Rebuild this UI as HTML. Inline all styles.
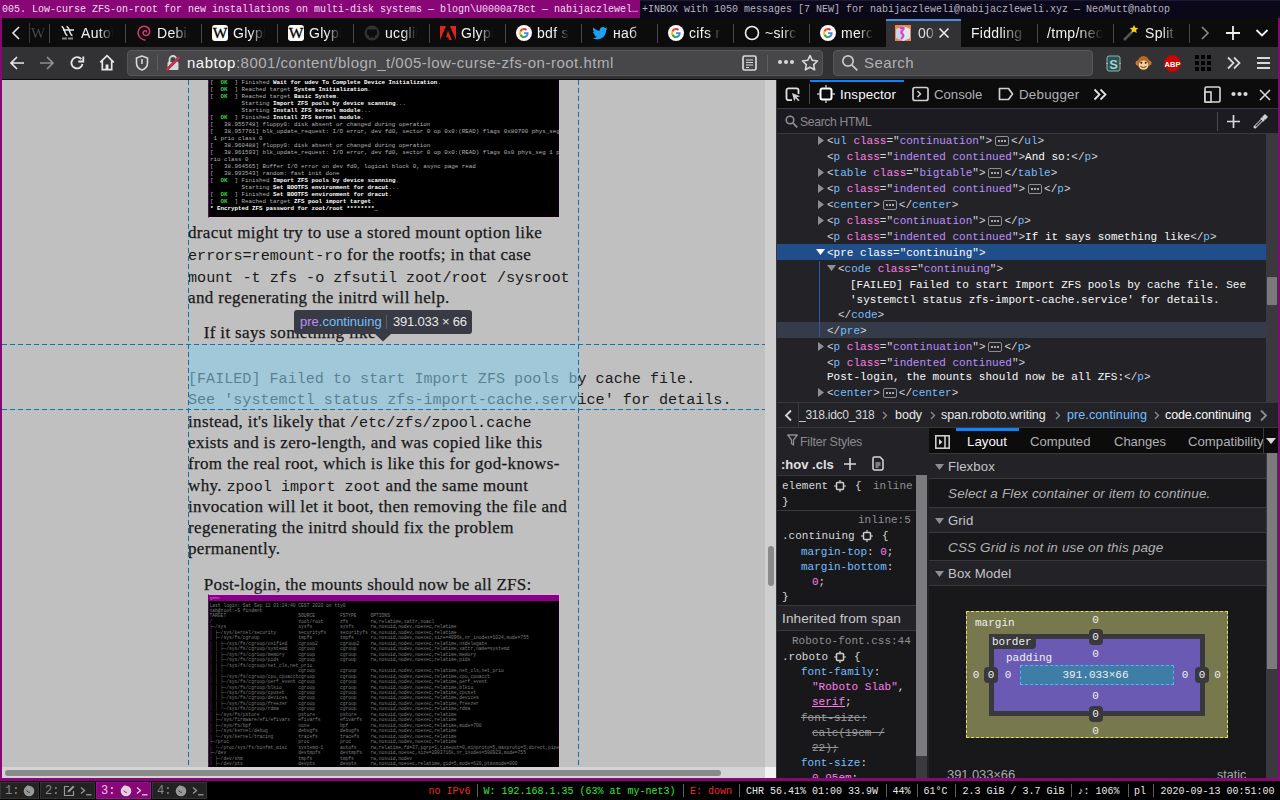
<!DOCTYPE html>
<html><head><meta charset="utf-8">
<style>
*{box-sizing:border-box}
html,body{margin:0;padding:0}
body{width:1280px;height:800px;position:relative;overflow:hidden;background:#000;font-family:"Liberation Sans",sans-serif}
.a{position:absolute}
.pre{white-space:pre}
.mono{font-family:"Liberation Mono",monospace}
.serif{font-family:"Liberation Serif",serif}
.fade{-webkit-mask-image:linear-gradient(to right,#000 55%,transparent 100%)}
</style></head><body>

<!-- ===== i3 title bars ===== -->
<div class="a" style="left:0;top:0;width:640px;height:18px;background:#880676"></div>
<div class="a mono pre" style="left:2px;top:1px;height:18px;line-height:18px;font-size:10px;color:#f4dcf4">005. Low-curse ZFS-on-root for new installations on multi-disk systems — blogn\U0000a78ct — nabijaczlewel…</div>
<div class="a" style="left:640px;top:0;width:640px;height:18px;background:#0b0819;border-top:1px solid #1d1836"></div>
<div class="a mono pre" style="left:642px;top:1px;height:18px;line-height:18px;font-size:10px;color:#b7b3c4">+INBOX with 1050 messages [7 NEW] for nabijaczleweli@nabijaczleweli.xyz — NeoMutt@nabtop</div>

<!-- ===== firefox frame ===== -->
<div class="a" style="left:0;top:18px;width:1280px;height:763px;background:#880676"></div>
<!-- tab bar -->
<div id="tabbar" class="a" style="left:2px;top:18px;width:1276px;height:29px;background:#0c0c0d"></div>
<!-- nav bar -->
<div id="navbar" class="a" style="left:2px;top:47px;width:1276px;height:32px;background:#323234"></div>
<div class="a" style="left:2px;top:79px;width:1276px;height:1px;background:#0c0c0d"></div>
<div id="tabs">
<svg class="a" style="left:11px;top:25px" width="10" height="16" viewBox="0 0 10 16"><path d="M8 2L2 8l6 6" fill="none" stroke="#e6e6e6" stroke-width="1.6"/></svg>
<div class="a" style="left:29px;top:23px;width:1px;height:20px;background:#3a3a3c"></div>
<div class="a fade" style="left:31px;top:24px;width:18px;height:18px;overflow:hidden;font-family:Liberation Serif;font-size:15px;line-height:18px;color:#4a4a4a">W</div>
<div class="a" style="left:49px;top:24px;width:1px;height:19px;background:#48484a"></div>
<div class="a" style="left:125px;top:24px;width:1px;height:19px;background:#48484a"></div>
<div class="a" style="left:201px;top:24px;width:1px;height:19px;background:#48484a"></div>
<div class="a" style="left:277px;top:24px;width:1px;height:19px;background:#48484a"></div>
<div class="a" style="left:353px;top:24px;width:1px;height:19px;background:#48484a"></div>
<div class="a" style="left:429px;top:24px;width:1px;height:19px;background:#48484a"></div>
<div class="a" style="left:505px;top:24px;width:1px;height:19px;background:#48484a"></div>
<div class="a" style="left:581px;top:24px;width:1px;height:19px;background:#48484a"></div>
<div class="a" style="left:657px;top:24px;width:1px;height:19px;background:#48484a"></div>
<div class="a" style="left:733px;top:24px;width:1px;height:19px;background:#48484a"></div>
<div class="a" style="left:809px;top:24px;width:1px;height:19px;background:#48484a"></div>
<div class="a" style="left:1037px;top:24px;width:1px;height:19px;background:#48484a"></div>
<div class="a" style="left:1113px;top:24px;width:1px;height:19px;background:#48484a"></div>
<div class="a" style="left:1189px;top:24px;width:1px;height:19px;background:#48484a"></div>
<div class="a" style="left:60px;top:25px;width:16px;height:16px"><svg width="16" height="16" viewBox="0 0 16 16"><path d="M1.500 1.500c1.500 0 2 1.500 3 4.500s1.500 4.500 3 4.500M6.500 1.500c1.500 0 2 1.500 3 4.500s1.500 4.500 3 4.500M3 5h11" fill="none" stroke="#e8e8e8" stroke-width="1.500"/><rect x="2" y="12.500" width="5" height="2" fill="#888"/><rect x="8" y="12.500" width="5" height="2" fill="#888"/></svg></div>
<div class="a pre fade" style="left:81px;top:24px;width:32px;height:18px;overflow:hidden;font-size:14px;line-height:18px;letter-spacing:0.3px;color:#f2f2f2">Autotools</div>
<div class="a" style="left:136px;top:25px;width:16px;height:16px"><svg width="16" height="16" viewBox="0 0 16 16"><path d="M9.5 15.2C6 14.600 2.300 12 2.100 8 1.900 4.300 4.700 1.200 8.300 1.300c3.200.1 5.500 2.500 5.400 5.300-.1 2.300-1.900 4-3.900 3.900-1.800-.1-2.900-1.400-2.700-2.900.2-1.300 1.300-2 2.300-1.800.9.200 1.300 1 1.100 1.700" fill="none" stroke="#d23a6e" stroke-width="1.6"/></svg></div>
<div class="a pre fade" style="left:157px;top:24px;width:32px;height:18px;overflow:hidden;font-size:14px;line-height:18px;letter-spacing:0.3px;color:#f2f2f2">Debian</div>
<div class="a" style="left:212px;top:25px;width:16px;height:16px"><svg width="16" height="16" viewBox="0 0 16 16"><rect x="0" y="0" width="16" height="16" rx="3" fill="#fff"/><text x="8" y="13" font-family="Liberation Serif" font-size="15.5" text-anchor="middle" fill="#000" stroke="#000" stroke-width="0.3">W</text></svg></div>
<div class="a pre fade" style="left:233px;top:24px;width:32px;height:18px;overflow:hidden;font-size:14px;line-height:18px;letter-spacing:0.3px;color:#f2f2f2">Glyph</div>
<div class="a" style="left:288px;top:25px;width:16px;height:16px"><svg width="16" height="16" viewBox="0 0 16 16"><rect x="0" y="0" width="16" height="16" rx="3" fill="#fff"/><text x="8" y="13" font-family="Liberation Serif" font-size="15.5" text-anchor="middle" fill="#000" stroke="#000" stroke-width="0.3">W</text></svg></div>
<div class="a pre fade" style="left:309px;top:24px;width:32px;height:18px;overflow:hidden;font-size:14px;line-height:18px;letter-spacing:0.3px;color:#f2f2f2">Glyph</div>
<div class="a" style="left:364px;top:25px;width:16px;height:16px"><svg width="16" height="16" viewBox="0 0 16 16"><circle cx="8" cy="8" r="7.5" fill="#333336"/><path d="M5 12.5v-2c-1.5-.3-2.3-1.2-2.3-3 0-.8.3-1.400.7-1.900-.1-.4-.1-1 .1-1.600.6 0 1.200.3 1.700.7.600-.2 1.200-.2 2.800-.2s2.200 0 2.800.2c.5-.4 1.100-.7 1.700-.7.2.6.2 1.200.1 1.600.4.500.7 1.100.7 1.900 0 1.800-.8 2.700-2.300 3v2z" fill="#0c0c0d"/></svg></div>
<div class="a pre fade" style="left:385px;top:24px;width:32px;height:18px;overflow:hidden;font-size:14px;line-height:18px;letter-spacing:0.3px;color:#f2f2f2">ucglib</div>
<div class="a" style="left:440px;top:25px;width:16px;height:16px"><svg width="16" height="16" viewBox="0 0 16 16"><path d="M0 1h6l-6 14z" fill="#e1251b"/><path d="M10 1h6v14z" fill="#e1251b"/><path d="M8 5.5l3.8 9.500h-2.600l-1.100-2.800H5.900z" fill="#e1251b"/></svg></div>
<div class="a pre fade" style="left:461px;top:24px;width:32px;height:18px;overflow:hidden;font-size:14px;line-height:18px;letter-spacing:0.3px;color:#f2f2f2">Glyph</div>
<div class="a" style="left:516px;top:25px;width:16px;height:16px"><svg width="16" height="16" viewBox="0 0 16 16"><circle cx="8" cy="8" r="8" fill="#fff"/><path d="M12.6 8.2c0-.4 0-.7-.1-1H8v1.9h2.6c-.1.6-.5 1.1-1 1.5v1.2h1.6c1-.9 1.4-2.2 1.4-3.6z" fill="#4285f4"/><path d="M8 13c1.3 0 2.4-.4 3.2-1.2l-1.6-1.2c-.4.3-1 .5-1.6.5-1.3 0-2.3-.8-2.7-2H3.7v1.3C4.5 12 6.1 13 8 13z" fill="#34a853"/><path d="M5.3 9.1c-.1-.3-.2-.7-.2-1.1s.1-.7.2-1.1V5.6H3.7C3.3 6.3 3.1 7.1 3.1 8s.2 1.7.6 2.4l1.6-1.3z" fill="#fbbc05"/><path d="M8 5.1c.7 0 1.3.2 1.8.7l1.4-1.4C10.4 3.5 9.3 3 8 3 6.1 3 4.5 4.100 3.700 5.600l1.6 1.3C5.700 5.900 6.700 5.100 8 5.100z" fill="#ea4335"/></svg></div>
<div class="a pre fade" style="left:537px;top:24px;width:32px;height:18px;overflow:hidden;font-size:14px;line-height:18px;letter-spacing:0.3px;color:#f2f2f2">bdf s</div>
<div class="a" style="left:592px;top:25px;width:16px;height:16px"><svg width="16" height="16" viewBox="0 0 16 16"><path d="M15.5 3.4c-.6.3-1.2.4-1.800.5.700-.4 1.100-1 1.400-1.700-.6.400-1.300.6-2 .8C12.500 2.400 11.700 2 10.800 2 9.100 2 7.700 3.400 7.700 5.100c0 .2 0 .5.100.7C5.200 5.700 2.900 4.400 1.400 2.600c-.3.500-.4 1-.4 1.600 0 1.100.5 2 1.400 2.600-.5 0-1-.2-1.400-.4 0 1.500 1.100 2.800 2.500 3.100-.3.100-.5.100-.8.100-.2 0-.4 0-.6-.1.400 1.200 1.500 2.100 2.900 2.200-1.100.8-2.400 1.300-3.900 1.300H.5c1.400.9 3 1.400 4.800 1.400 5.700 0 8.800-4.700 8.800-8.800v-.4c.6-.4 1.100-1 1.400-1.600z" fill="#1da1f2"/></svg></div>
<div class="a pre fade" style="left:613px;top:24px;width:32px;height:18px;overflow:hidden;font-size:14px;line-height:18px;letter-spacing:0.3px;color:#f2f2f2">наб</div>
<div class="a" style="left:668px;top:25px;width:16px;height:16px"><svg width="16" height="16" viewBox="0 0 16 16"><circle cx="8" cy="8" r="8" fill="#fff"/><path d="M12.6 8.2c0-.4 0-.7-.1-1H8v1.9h2.6c-.1.6-.5 1.1-1 1.5v1.2h1.6c1-.9 1.4-2.2 1.4-3.6z" fill="#4285f4"/><path d="M8 13c1.3 0 2.4-.4 3.2-1.2l-1.6-1.2c-.4.3-1 .5-1.6.5-1.3 0-2.3-.8-2.7-2H3.7v1.3C4.5 12 6.1 13 8 13z" fill="#34a853"/><path d="M5.3 9.1c-.1-.3-.2-.7-.2-1.1s.1-.7.2-1.1V5.6H3.7C3.3 6.3 3.1 7.1 3.1 8s.2 1.7.6 2.4l1.6-1.3z" fill="#fbbc05"/><path d="M8 5.1c.7 0 1.3.2 1.8.7l1.4-1.4C10.4 3.5 9.3 3 8 3 6.1 3 4.5 4.100 3.700 5.600l1.6 1.3C5.700 5.900 6.700 5.100 8 5.100z" fill="#ea4335"/></svg></div>
<div class="a pre fade" style="left:689px;top:24px;width:32px;height:18px;overflow:hidden;font-size:14px;line-height:18px;letter-spacing:0.3px;color:#f2f2f2">cifs n</div>
<div class="a" style="left:744px;top:25px;width:16px;height:16px"><svg width="16" height="16" viewBox="0 0 16 16"><circle cx="8" cy="8" r="6.5" fill="none" stroke="#f0f0f0" stroke-width="1.6"/></svg></div>
<div class="a pre fade" style="left:765px;top:24px;width:32px;height:18px;overflow:hidden;font-size:14px;line-height:18px;letter-spacing:0.3px;color:#f2f2f2">~sirc</div>
<div class="a" style="left:820px;top:25px;width:16px;height:16px"><svg width="16" height="16" viewBox="0 0 16 16"><circle cx="8" cy="8" r="8" fill="#fff"/><path d="M12.6 8.2c0-.4 0-.7-.1-1H8v1.9h2.6c-.1.6-.5 1.1-1 1.5v1.2h1.6c1-.9 1.4-2.2 1.4-3.6z" fill="#4285f4"/><path d="M8 13c1.3 0 2.4-.4 3.2-1.2l-1.6-1.2c-.4.3-1 .5-1.6.5-1.3 0-2.3-.8-2.7-2H3.7v1.3C4.5 12 6.1 13 8 13z" fill="#34a853"/><path d="M5.3 9.1c-.1-.3-.2-.7-.2-1.1s.1-.7.2-1.1V5.6H3.7C3.3 6.3 3.1 7.1 3.1 8s.2 1.7.6 2.4l1.6-1.3z" fill="#fbbc05"/><path d="M8 5.1c.7 0 1.3.2 1.8.7l1.4-1.4C10.4 3.5 9.3 3 8 3 6.1 3 4.5 4.100 3.700 5.600l1.6 1.3C5.700 5.900 6.700 5.100 8 5.100z" fill="#ea4335"/></svg></div>
<div class="a pre fade" style="left:841px;top:24px;width:32px;height:18px;overflow:hidden;font-size:14px;line-height:18px;letter-spacing:0.3px;color:#f2f2f2">merc</div>
<div class="a" style="left:886px;top:19px;width:75px;height:28px;background:#323234"></div>
<div class="a" style="left:886px;top:19px;width:75px;height:2px;background:#3d91e8"></div>
<div class="a" style="left:895px;top:25px;width:16px;height:16px"><svg width="16" height="16" viewBox="0 0 16 16"><rect x="0" y="0" width="16" height="16" fill="#e8874a"/><path d="M1 4l7-3 7 3v9l-7 3-7-3z" fill="#c9d4ec"/><path d="M8 1l7 3v9l-7 3z" fill="#dfe6f4"/><path d="M5 3.500c2-1.500 4.500-1 3.500.5S5 7 7 8.5s2 3-1 5.500" fill="none" stroke="#e63cbe" stroke-width="2.200"/></svg></div>
<div class="a pre fade" style="left:918px;top:24px;width:18px;height:18px;overflow:hidden;font-size:14px;line-height:18px;letter-spacing:0.3px;color:#e0e0e0">005</div>
<svg class="a" style="left:938px;top:27px" width="12" height="12" viewBox="0 0 12 12"><path d="M1.500 1.500l9 9M10.500 1.500l-9 9" stroke="#f0f0f0" stroke-width="1.500"/></svg>
<div class="a pre fade" style="left:971px;top:24px;width:56px;height:18px;overflow:hidden;font-size:14px;line-height:18px;letter-spacing:0.3px;color:#f2f2f2">Fiddling w</div>
<div class="a pre fade" style="left:1047px;top:24px;width:56px;height:18px;overflow:hidden;font-size:14px;line-height:18px;letter-spacing:0.3px;color:#f2f2f2">/tmp/neomutt</div>
<div class="a" style="left:1123px;top:25px;width:16px;height:16px"><svg width="16" height="16" viewBox="0 0 16 16"><path d="M1 15l8-8" stroke="#555" stroke-width="2.500"/><path d="M11 0l1.300 2.700 3 .4-2.200 2 .6 3-2.700-1.500-2.700 1.500.6-3-2.200-2 3-.4z" fill="#fbd01e"/></svg></div>
<div class="a pre fade" style="left:1145px;top:24px;width:32px;height:18px;overflow:hidden;font-size:14px;line-height:18px;letter-spacing:0.3px;color:#f2f2f2">Split</div>
<svg class="a" style="left:1200px;top:25px" width="10" height="16" viewBox="0 0 10 16"><path d="M2 2l6 6-6 6" fill="none" stroke="#8a8a8c" stroke-width="1.600"/></svg>
<svg class="a" style="left:1225px;top:25px" width="16" height="16" viewBox="0 0 16 16"><path d="M8 1v14M1 8h14" stroke="#f0f0f0" stroke-width="1.800"/></svg>
<svg class="a" style="left:1255px;top:28px" width="14" height="10" viewBox="0 0 14 10"><path d="M1.500 2l5.500 5.500L12.500 2" fill="none" stroke="#f0f0f0" stroke-width="1.800"/></svg>
</div>
<div id="nav">
<!-- back -->
<svg class="a" style="left:9px;top:55px" width="16" height="16" viewBox="0 0 16 16"><path d="M15 8H2M8 2L2 8l6 6" fill="none" stroke="#e8e8e8" stroke-width="1.700"/></svg>
<!-- forward -->
<svg class="a" style="left:39px;top:55px" width="16" height="16" viewBox="0 0 16 16"><path d="M1 8h13M8 2l6 6-6 6" fill="none" stroke="#8f8f90" stroke-width="1.700"/></svg>
<!-- reload -->
<svg class="a" style="left:69px;top:55px" width="16" height="16" viewBox="0 0 16 16"><path d="M13.500 9A5.600 5.600 0 1 1 12.300 4.200" fill="none" stroke="#e8e8e8" stroke-width="1.800"/><path d="M14.300 1.500v5h-5" fill="none" stroke="#e8e8e8" stroke-width="1.800"/></svg>
<!-- home -->
<svg class="a" style="left:99px;top:54px" width="16" height="17" viewBox="0 0 16 17"><path d="M1.200 8.300L8 1.600l6.800 6.700M3.300 6.600v9h9.400v-9" fill="none" stroke="#e8e8e8" stroke-width="1.700"/><rect x="6.600" y="10.500" width="2.800" height="5" fill="#e8e8e8"/></svg>
<!-- url bar -->
<div class="a" style="left:127px;top:50px;width:696px;height:26px;background:#474749;border:1px solid #575759;border-radius:4px"></div>
<svg class="a" style="left:135px;top:55px" width="14" height="16" viewBox="0 0 14 16"><path d="M7 1L1.500 3v5c0 3.500 2.700 6 5.500 7 2.800-1 5.500-3.500 5.500-7V3z" fill="none" stroke="#d8d8d8" stroke-width="1.600"/><path d="M7 4v5" stroke="#d8d8d8" stroke-width="1.600"/></svg>
<div class="a" style="left:157px;top:55px;width:1px;height:16px;background:#5f5f61"></div>
<svg class="a" style="left:165px;top:54px" width="16" height="17" viewBox="0 0 16 17"><path d="M4.500 8V5.500a3.500 3.500 0 0 1 7 0V8" fill="none" stroke="#d8d8d8" stroke-width="1.800"/><rect x="2.500" y="8" width="11" height="8" rx="1" fill="#d8d8d8"/><path d="M1 16.500L15 2.500" stroke="#474749" stroke-width="3"/><path d="M1.500 16L14.500 3" stroke="#e22850" stroke-width="2"/></svg>
<div class="a pre" style="left:187px;top:54px;height:18px;line-height:18px;font-size:15px;letter-spacing:0.5px;color:#b1b1b3"><span style="color:#f9f9fa">nabtop</span>:8001/content/blogn_t/005-low-curse-zfs-on-root.html</div>
<!-- reader -->
<svg class="a" style="left:742px;top:55px" width="15" height="16" viewBox="0 0 15 16"><rect x="1" y="1" width="13" height="14" rx="1.500" fill="none" stroke="#d8d8d8" stroke-width="1.700"/><path d="M4 5h7M4 7.500h7M4 10h7M4 12.500h3" stroke="#d8d8d8" stroke-width="1.100"/></svg>
<div class="a" style="left:767px;top:55px;width:1px;height:17px;background:#5f5f61"></div>
<!-- dots -->
<svg class="a" style="left:777px;top:59px" width="18" height="6" viewBox="0 0 18 6"><circle cx="3" cy="3" r="2" fill="#d8d8d8"/><circle cx="9" cy="3" r="2" fill="#d8d8d8"/><circle cx="15" cy="3" r="2" fill="#d8d8d8"/></svg>
<!-- star -->
<svg class="a" style="left:801px;top:54px" width="18" height="18" viewBox="0 0 18 18"><path d="M9 1.500l2.300 4.800 5.200.7-3.800 3.600.9 5.200L9 13.300 4.400 15.800l.9-5.200L1.500 7l5.200-.7z" fill="none" stroke="#d8d8d8" stroke-width="1.600" stroke-linejoin="round"/></svg>
<!-- search box -->
<div class="a" style="left:833px;top:50px;width:260px;height:26px;background:#474749;border:1px solid #575759;border-radius:4px"></div>
<svg class="a" style="left:841px;top:54px" width="18" height="18" viewBox="0 0 18 18"><circle cx="7" cy="7" r="5.200" fill="none" stroke="#c8c8c8" stroke-width="1.700"/><path d="M10.800 10.800l5.500 5.500" stroke="#c8c8c8" stroke-width="1.800"/></svg>
<div class="a pre" style="left:864px;top:54px;height:18px;line-height:18px;font-size:15px;letter-spacing:0.4px;color:#b1b1b3">Search</div>
<!-- S icon -->
<svg class="a" style="left:1105px;top:55px" width="17" height="17" viewBox="0 0 17 17"><rect x="2" y="1" width="13" height="15" rx="2" fill="#2b5352" stroke="#8fb8b0" stroke-width="1"/><path d="M1 8.500h2M14 8.500h2" stroke="#8fb8b0" stroke-width="1"/><text x="8.500" y="13.500" font-family="Liberation Sans" font-weight="bold" font-size="13" text-anchor="middle" fill="#a9d1cb">S</text></svg>
<!-- monkey -->
<svg class="a" style="left:1135px;top:55px" width="17" height="17" viewBox="0 0 17 17"><circle cx="3" cy="8" r="2.500" fill="#c97a2c"/><circle cx="14" cy="8" r="2.500" fill="#c97a2c"/><ellipse cx="8.500" cy="8" rx="6" ry="7" fill="#b86a22"/><ellipse cx="8.500" cy="10" rx="4.800" ry="4.500" fill="#f1d19b"/><circle cx="6.300" cy="7.800" r="1" fill="#222"/><circle cx="10.700" cy="7.800" r="1" fill="#222"/><path d="M5.500 11.500q3 2 6 0" stroke="#5a3a1a" stroke-width="1" fill="none"/></svg>
<!-- ABP -->
<svg class="a" style="left:1164px;top:55px" width="17" height="17" viewBox="0 0 17 17"><path d="M5.200 .5h6.600l4.700 4.700v6.600l-4.700 4.700H5.200L.5 11.800V5.200z" fill="#d40000"/><text x="8.500" y="11.800" font-family="Liberation Sans" font-weight="bold" font-size="7.500" text-anchor="middle" fill="#fff">ABP</text></svg>
<!-- grid -->
<svg class="a" style="left:1195px;top:55px" width="16" height="16" viewBox="0 0 16 16"><g fill="#000"><rect x="0" y="0" width="4" height="4"/><rect x="6" y="0" width="4" height="4"/><rect x="12" y="0" width="4" height="4"/><rect x="0" y="6" width="4" height="4"/><rect x="6" y="6" width="4" height="4"/><rect x="12" y="6" width="4" height="4"/><rect x="0" y="12" width="4" height="4"/><rect x="6" y="12" width="4" height="4"/><rect x="12" y="12" width="4" height="4"/></g></svg>
<!-- >> -->
<svg class="a" style="left:1226px;top:56px" width="16" height="14" viewBox="0 0 16 14"><path d="M2 1.500l5.500 5.500L2 12.500M8 1.500l5.500 5.500L8 12.500" fill="none" stroke="#d8d8d8" stroke-width="1.800"/></svg>
<!-- hamburger -->
<svg class="a" style="left:1256px;top:56px" width="15" height="14" viewBox="0 0 15 14"><path d="M1 2h13M1 7h13M1 12h13" stroke="#d8d8d8" stroke-width="1.800"/></svg>
</div>


<!-- ===== page content ===== -->
<div id="page" class="a" style="left:2px;top:80px;width:774px;height:687px;background:#c0c0c0;overflow:hidden">
<div class="a" style="left:206.00px;top:-20.00px;width:352px;height:158px;background:#000;border-left:1px solid #5a105a;border-right:1px solid #e0b0e0;border-bottom:1px solid #e0b0e0;overflow:hidden">
<div class="a pre mono" style="left:1px;top:18.50px;height:8px;line-height:8px;font-size:5.83px;font-weight:bold"><span style="color:#b4b4b4;font-weight:normal">[  </span><span style="color:#3cd23c">OK</span><span style="color:#b4b4b4;font-weight:normal">  ] </span><span style="color:#b4b4b4;font-weight:normal">Finished </span><span style="color:#fff">Wait for udev To Complete Device Initialization</span><span style="color:#b4b4b4;font-weight:normal">.</span></div>
<div class="a pre mono" style="left:1px;top:25.55px;height:8px;line-height:8px;font-size:5.83px;font-weight:bold"><span style="color:#b4b4b4;font-weight:normal">[  </span><span style="color:#3cd23c">OK</span><span style="color:#b4b4b4;font-weight:normal">  ] </span><span style="color:#b4b4b4;font-weight:normal">Reached target </span><span style="color:#fff">System Initialization</span><span style="color:#b4b4b4;font-weight:normal">.</span></div>
<div class="a pre mono" style="left:1px;top:32.60px;height:8px;line-height:8px;font-size:5.83px;font-weight:bold"><span style="color:#b4b4b4;font-weight:normal">[  </span><span style="color:#3cd23c">OK</span><span style="color:#b4b4b4;font-weight:normal">  ] </span><span style="color:#b4b4b4;font-weight:normal">Reached target </span><span style="color:#fff">Basic System</span><span style="color:#b4b4b4;font-weight:normal">.</span></div>
<div class="a pre mono" style="left:1px;top:39.65px;height:8px;line-height:8px;font-size:5.83px;font-weight:bold"><span style="color:#b4b4b4;font-weight:normal">         Starting </span><span style="color:#fff">Import ZFS pools by device scanning</span><span style="color:#b4b4b4;font-weight:normal">...</span></div>
<div class="a pre mono" style="left:1px;top:46.70px;height:8px;line-height:8px;font-size:5.83px;font-weight:bold"><span style="color:#b4b4b4;font-weight:normal">         Starting </span><span style="color:#fff">Install ZFS kernel module</span><span style="color:#b4b4b4;font-weight:normal">...</span></div>
<div class="a pre mono" style="left:1px;top:53.75px;height:8px;line-height:8px;font-size:5.83px;font-weight:bold"><span style="color:#b4b4b4;font-weight:normal">[  </span><span style="color:#3cd23c">OK</span><span style="color:#b4b4b4;font-weight:normal">  ] </span><span style="color:#b4b4b4;font-weight:normal">Finished </span><span style="color:#fff">Install ZFS kernel module</span><span style="color:#b4b4b4;font-weight:normal">.</span></div>
<div class="a pre mono" style="left:1px;top:60.80px;height:8px;line-height:8px;font-size:5.83px;font-weight:bold"><span style="color:#b4b4b4;font-weight:normal">[   38.955748] floppy0: disk absent or changed during operation</span><span style="color:#fff"></span><span style="color:#b4b4b4;font-weight:normal"></span></div>
<div class="a pre mono" style="left:1px;top:67.85px;height:8px;line-height:8px;font-size:5.83px;font-weight:bold"><span style="color:#b4b4b4;font-weight:normal">[   38.957761] blk_update_request: I/O error, dev fd0, sector 0 op 0x0:(READ) flags 0x80700 phys_seg</span><span style="color:#fff"></span><span style="color:#b4b4b4;font-weight:normal"></span></div>
<div class="a pre mono" style="left:1px;top:74.90px;height:8px;line-height:8px;font-size:5.83px;font-weight:bold"><span style="color:#b4b4b4;font-weight:normal"> 1 prio class 0</span><span style="color:#fff"></span><span style="color:#b4b4b4;font-weight:normal"></span></div>
<div class="a pre mono" style="left:1px;top:81.95px;height:8px;line-height:8px;font-size:5.83px;font-weight:bold"><span style="color:#b4b4b4;font-weight:normal">[   38.960488] floppy0: disk absent or changed during operation</span><span style="color:#fff"></span><span style="color:#b4b4b4;font-weight:normal"></span></div>
<div class="a pre mono" style="left:1px;top:89.00px;height:8px;line-height:8px;font-size:5.83px;font-weight:bold"><span style="color:#b4b4b4;font-weight:normal">[   38.961593] blk_update_request: I/O error, dev fd0, sector 0 op 0x0:(READ) flags 0x0 phys_seg 1 p</span><span style="color:#fff"></span><span style="color:#b4b4b4;font-weight:normal"></span></div>
<div class="a pre mono" style="left:1px;top:96.05px;height:8px;line-height:8px;font-size:5.83px;font-weight:bold"><span style="color:#b4b4b4;font-weight:normal">rio class 0</span><span style="color:#fff"></span><span style="color:#b4b4b4;font-weight:normal"></span></div>
<div class="a pre mono" style="left:1px;top:103.10px;height:8px;line-height:8px;font-size:5.83px;font-weight:bold"><span style="color:#b4b4b4;font-weight:normal">[   38.964565] Buffer I/O error on dev fd0, logical block 0, async page read</span><span style="color:#fff"></span><span style="color:#b4b4b4;font-weight:normal"></span></div>
<div class="a pre mono" style="left:1px;top:110.15px;height:8px;line-height:8px;font-size:5.83px;font-weight:bold"><span style="color:#b4b4b4;font-weight:normal">[   38.993543] random: fast init done</span><span style="color:#fff"></span><span style="color:#b4b4b4;font-weight:normal"></span></div>
<div class="a pre mono" style="left:1px;top:117.20px;height:8px;line-height:8px;font-size:5.83px;font-weight:bold"><span style="color:#b4b4b4;font-weight:normal">[  </span><span style="color:#3cd23c">OK</span><span style="color:#b4b4b4;font-weight:normal">  ] </span><span style="color:#b4b4b4;font-weight:normal">Finished </span><span style="color:#fff">Import ZFS pools by device scanning</span><span style="color:#b4b4b4;font-weight:normal">.</span></div>
<div class="a pre mono" style="left:1px;top:124.25px;height:8px;line-height:8px;font-size:5.83px;font-weight:bold"><span style="color:#b4b4b4;font-weight:normal">         Starting </span><span style="color:#fff">Set BOOTFS environment for dracut</span><span style="color:#b4b4b4;font-weight:normal">...</span></div>
<div class="a pre mono" style="left:1px;top:131.30px;height:8px;line-height:8px;font-size:5.83px;font-weight:bold"><span style="color:#b4b4b4;font-weight:normal">[  </span><span style="color:#3cd23c">OK</span><span style="color:#b4b4b4;font-weight:normal">  ] </span><span style="color:#b4b4b4;font-weight:normal">Finished </span><span style="color:#fff">Set BOOTFS environment for dracut</span><span style="color:#b4b4b4;font-weight:normal">.</span></div>
<div class="a pre mono" style="left:1px;top:138.35px;height:8px;line-height:8px;font-size:5.83px;font-weight:bold"><span style="color:#b4b4b4;font-weight:normal">[  </span><span style="color:#3cd23c">OK</span><span style="color:#b4b4b4;font-weight:normal">  ] </span><span style="color:#b4b4b4;font-weight:normal">Reached target </span><span style="color:#fff">ZFS pool import target</span><span style="color:#b4b4b4;font-weight:normal">.</span></div>
<div class="a pre mono" style="left:1px;top:145.40px;height:8px;line-height:8px;font-size:5.83px;font-weight:bold"><span style="color:#b4b4b4;font-weight:normal"></span><span style="color:#fff">* Encrypted ZFS password for zoot/root ********_</span><span style="color:#b4b4b4;font-weight:normal"></span></div>
</div>
<div class="a pre" style="left:186.00px;top:141.85px;font-family:'Liberation Serif',serif;font-size:17px;line-height:22px;letter-spacing:0.35px;color:#181818;-webkit-text-stroke:0.25px #181818">dracut might try to use a stored mount option like</div>
<div class="a pre" style="left:186.00px;top:163.85px;font-family:'Liberation Serif',serif;font-size:17px;line-height:22px;letter-spacing:0.35px;color:#181818;-webkit-text-stroke:0.25px #181818"><span class="mono" style="font-size:15.15px;letter-spacing:0;-webkit-text-stroke:0">errors=remount-ro</span> for the rootfs; in that case</div>
<div class="a pre" style="left:186.00px;top:185.80px;font-family:'Liberation Serif',serif;font-size:17px;line-height:22px;letter-spacing:0.35px;color:#181818;-webkit-text-stroke:0.25px #181818"><span class="mono" style="font-size:15.15px;letter-spacing:0;-webkit-text-stroke:0">mount -t zfs -o zfsutil zoot/root /sysroot</span></div>
<div class="a pre" style="left:186.00px;top:206.80px;font-family:'Liberation Serif',serif;font-size:17px;line-height:22px;letter-spacing:0.35px;color:#181818;-webkit-text-stroke:0.25px #181818">and regenerating the initrd will help.</div>
<div class="a pre" style="left:201.70px;top:242.10px;font-family:'Liberation Serif',serif;font-size:17px;line-height:22px;letter-spacing:0.35px;color:#181818;-webkit-text-stroke:0.25px #181818">If it says something like</div>
<div class="a pre mono" style="left:186.00px;top:287.50px;font-size:15.1px;line-height:22px;color:#1c1c1c">[FAILED] Failed to start Import ZFS pools by cache file.</div>
<div class="a pre mono" style="left:186.00px;top:309.20px;font-size:15.1px;line-height:22px;color:#1c1c1c">See &#x27;systemctl status zfs-import-cache.service&#x27; for details.</div>
<div class="a pre" style="left:186.00px;top:331.00px;font-family:'Liberation Serif',serif;font-size:17px;line-height:22px;letter-spacing:0.35px;color:#181818;-webkit-text-stroke:0.25px #181818">instead, it&#x27;s likely that <span class="mono" style="font-size:15.15px;letter-spacing:0;-webkit-text-stroke:0">/etc/zfs/zpool.cache</span></div>
<div class="a pre" style="left:186.00px;top:351.60px;font-family:'Liberation Serif',serif;font-size:17px;line-height:22px;letter-spacing:0.35px;color:#181818;-webkit-text-stroke:0.25px #181818">exists and is zero-length, and was copied like this</div>
<div class="a pre" style="left:186.00px;top:372.85px;font-family:'Liberation Serif',serif;font-size:17px;line-height:22px;letter-spacing:0.35px;color:#181818;-webkit-text-stroke:0.25px #181818">from the real root, which is like this for god-knows-</div>
<div class="a pre" style="left:186.00px;top:394.70px;font-family:'Liberation Serif',serif;font-size:17px;line-height:22px;letter-spacing:0.35px;color:#181818;-webkit-text-stroke:0.25px #181818">why. <span class="mono" style="font-size:15.15px;letter-spacing:0;-webkit-text-stroke:0">zpool import zoot</span> and the same mount</div>
<div class="a pre" style="left:186.00px;top:415.60px;font-family:'Liberation Serif',serif;font-size:17px;line-height:22px;letter-spacing:0.35px;color:#181818;-webkit-text-stroke:0.25px #181818">invocation will let it boot, then removing the file and</div>
<div class="a pre" style="left:186.00px;top:436.60px;font-family:'Liberation Serif',serif;font-size:17px;line-height:22px;letter-spacing:0.35px;color:#181818;-webkit-text-stroke:0.25px #181818">regenerating the initrd should fix the problem</div>
<div class="a pre" style="left:186.00px;top:457.50px;font-family:'Liberation Serif',serif;font-size:17px;line-height:22px;letter-spacing:0.35px;color:#181818;-webkit-text-stroke:0.25px #181818">permanently.</div>
<div class="a pre" style="left:201.75px;top:493.60px;font-family:'Liberation Serif',serif;font-size:17px;line-height:22px;letter-spacing:0.35px;color:#181818;-webkit-text-stroke:0.25px #181818"><span style="letter-spacing:0.25px">Post-login, the mounts should now be all ZFS:</span></div>
<div class="a" style="left:206.00px;top:514.00px;width:352px;height:200px;background:#000;border-top:1px solid #e0b0e0;border-left:1px solid #5a105a;border-right:1px solid #e0b0e0;overflow:hidden">
<div class="a" style="left:0;top:0;width:350px;height:6px;background:#880088"></div>
<div class="a mono pre" style="left:1px;top:0;height:6px;line-height:6px;font-size:4px;color:#e070e0">QEMU</div>
<div class="a pre mono" style="left:0.5px;top:7.50px;height:6px;line-height:6px;font-size:4.63px;color:#7e7e7e">Last login: Sat Sep 12 03:24:40 CEST 2020 on tty0</div>
<div class="a pre mono" style="left:0.5px;top:12.97px;height:6px;line-height:6px;font-size:4.63px;color:#7e7e7e">nab@zoot:~$ findmnt</div>
<div class="a pre mono" style="left:0.5px;top:18.44px;height:6px;line-height:6px;font-size:4.63px;color:#7e7e7e">TARGET                          SOURCE         FSTYPE     OPTIONS</div>
<div class="a pre mono" style="left:0.5px;top:23.91px;height:6px;line-height:6px;font-size:4.63px;color:#7e7e7e">/                               zoot/root      zfs        rw,relatime,xattr,noacl</div>
<div class="a pre mono" style="left:0.5px;top:29.38px;height:6px;line-height:6px;font-size:4.63px;color:#7e7e7e">├─/sys                          sysfs          sysfs      rw,nosuid,nodev,noexec,relatime</div>
<div class="a pre mono" style="left:0.5px;top:34.85px;height:6px;line-height:6px;font-size:4.63px;color:#7e7e7e">│ ├─/sys/kernel/security        securityfs     securityfs rw,nosuid,nodev,noexec,relatime</div>
<div class="a pre mono" style="left:0.5px;top:40.32px;height:6px;line-height:6px;font-size:4.63px;color:#7e7e7e">│ ├─/sys/fs/cgroup              tmpfs          tmpfs      ro,nosuid,nodev,noexec,size=4096k,nr_inodes=1024,mode=755</div>
<div class="a pre mono" style="left:0.5px;top:45.79px;height:6px;line-height:6px;font-size:4.63px;color:#7e7e7e">│ │ ├─/sys/fs/cgroup/unified    cgroup2        cgroup2    rw,nosuid,nodev,noexec,relatime,nsdelegate</div>
<div class="a pre mono" style="left:0.5px;top:51.26px;height:6px;line-height:6px;font-size:4.63px;color:#7e7e7e">│ │ ├─/sys/fs/cgroup/systemd    cgroup         cgroup     rw,nosuid,nodev,noexec,relatime,xattr,name=systemd</div>
<div class="a pre mono" style="left:0.5px;top:56.73px;height:6px;line-height:6px;font-size:4.63px;color:#7e7e7e">│ │ ├─/sys/fs/cgroup/memory     cgroup         cgroup     rw,nosuid,nodev,noexec,relatime,memory</div>
<div class="a pre mono" style="left:0.5px;top:62.20px;height:6px;line-height:6px;font-size:4.63px;color:#7e7e7e">│ │ ├─/sys/fs/cgroup/pids       cgroup         cgroup     rw,nosuid,nodev,noexec,relatime,pids</div>
<div class="a pre mono" style="left:0.5px;top:67.67px;height:6px;line-height:6px;font-size:4.63px;color:#7e7e7e">│ │ ├─/sys/fs/cgroup/net_cls,net_prio</div>
<div class="a pre mono" style="left:0.5px;top:73.14px;height:6px;line-height:6px;font-size:4.63px;color:#7e7e7e">│ │ │                           cgroup         cgroup     rw,nosuid,nodev,noexec,relatime,net_cls,net_prio</div>
<div class="a pre mono" style="left:0.5px;top:78.61px;height:6px;line-height:6px;font-size:4.63px;color:#7e7e7e">│ │ ├─/sys/fs/cgroup/cpu,cpuacctcgroup         cgroup     rw,nosuid,nodev,noexec,relatime,cpu,cpuacct</div>
<div class="a pre mono" style="left:0.5px;top:84.08px;height:6px;line-height:6px;font-size:4.63px;color:#7e7e7e">│ │ ├─/sys/fs/cgroup/perf_event cgroup         cgroup     rw,nosuid,nodev,noexec,relatime,perf_event</div>
<div class="a pre mono" style="left:0.5px;top:89.55px;height:6px;line-height:6px;font-size:4.63px;color:#7e7e7e">│ │ ├─/sys/fs/cgroup/blkio      cgroup         cgroup     rw,nosuid,nodev,noexec,relatime,blkio</div>
<div class="a pre mono" style="left:0.5px;top:95.02px;height:6px;line-height:6px;font-size:4.63px;color:#7e7e7e">│ │ ├─/sys/fs/cgroup/cpuset     cgroup         cgroup     rw,nosuid,nodev,noexec,relatime,cpuset</div>
<div class="a pre mono" style="left:0.5px;top:100.49px;height:6px;line-height:6px;font-size:4.63px;color:#7e7e7e">│ │ ├─/sys/fs/cgroup/devices    cgroup         cgroup     rw,nosuid,nodev,noexec,relatime,devices</div>
<div class="a pre mono" style="left:0.5px;top:105.96px;height:6px;line-height:6px;font-size:4.63px;color:#7e7e7e">│ │ ├─/sys/fs/cgroup/freezer    cgroup         cgroup     rw,nosuid,nodev,noexec,relatime,freezer</div>
<div class="a pre mono" style="left:0.5px;top:111.43px;height:6px;line-height:6px;font-size:4.63px;color:#7e7e7e">│ │ └─/sys/fs/cgroup/rdma       cgroup         cgroup     rw,nosuid,nodev,noexec,relatime,rdma</div>
<div class="a pre mono" style="left:0.5px;top:116.90px;height:6px;line-height:6px;font-size:4.63px;color:#7e7e7e">│ ├─/sys/fs/pstore              pstore         pstore     rw,nosuid,nodev,noexec,relatime</div>
<div class="a pre mono" style="left:0.5px;top:122.37px;height:6px;line-height:6px;font-size:4.63px;color:#7e7e7e">│ ├─/sys/firmware/efi/efivars   efivarfs       efivarfs   rw,nosuid,nodev,noexec,relatime</div>
<div class="a pre mono" style="left:0.5px;top:127.84px;height:6px;line-height:6px;font-size:4.63px;color:#7e7e7e">│ ├─/sys/fs/bpf                 none           bpf        rw,nosuid,nodev,noexec,relatime,mode=700</div>
<div class="a pre mono" style="left:0.5px;top:133.31px;height:6px;line-height:6px;font-size:4.63px;color:#7e7e7e">│ ├─/sys/kernel/debug           debugfs        debugfs    rw,nosuid,nodev,noexec,relatime</div>
<div class="a pre mono" style="left:0.5px;top:138.78px;height:6px;line-height:6px;font-size:4.63px;color:#7e7e7e">│ └─/sys/kernel/tracing         tracefs        tracefs    rw,nosuid,nodev,noexec,relatime</div>
<div class="a pre mono" style="left:0.5px;top:144.25px;height:6px;line-height:6px;font-size:4.63px;color:#7e7e7e">├─/proc                         proc           proc       rw,nosuid,nodev,noexec,relatime</div>
<div class="a pre mono" style="left:0.5px;top:149.72px;height:6px;line-height:6px;font-size:4.63px;color:#7e7e7e">│ └─/proc/sys/fs/binfmt_misc    systemd-1      autofs     rw,relatime,fd=37,pgrp=1,timeout=0,minproto=5,maxproto=5,direct,pipe_ino=14933</div>
<div class="a pre mono" style="left:0.5px;top:155.19px;height:6px;line-height:6px;font-size:4.63px;color:#7e7e7e">├─/dev                          devtmpfs       devtmpfs   rw,nosuid,noexec,size=2003716k,nr_inodes=500929,mode=755</div>
<div class="a pre mono" style="left:0.5px;top:160.66px;height:6px;line-height:6px;font-size:4.63px;color:#7e7e7e">│ ├─/dev/shm                    tmpfs          tmpfs      rw,nosuid,nodev</div>
<div class="a pre mono" style="left:0.5px;top:166.13px;height:6px;line-height:6px;font-size:4.63px;color:#7e7e7e">│ ├─/dev/pts                    devpts         devpts     rw,nosuid,noexec,relatime,gid=5,mode=620,ptmxmode=000</div>
<div class="a pre mono" style="left:0.5px;top:171.60px;height:6px;line-height:6px;font-size:4.63px;color:#7e7e7e">│ ├─/dev/hugepages              hugetlbfs      hugetlbfs  rw,relatime,pagesize=2M</div>
</div>
<div class="a" style="left:763.00px;top:0.00px;width:11px;height:687px;background:#cfcfcf"></div>
<div class="a" style="left:766.00px;top:466.00px;width:6px;height:40px;background:#8a8a8a;border-radius:3px"></div>
</div>
<div class="a" style="left:188px;top:344px;width:391px;height:66px;background:rgba(135,206,235,0.56)"></div>
<div class="a" style="left:2px;top:344px;width:763px;height:1px;background:repeating-linear-gradient(to right,#1f6f99 0 5px,#8fc8e4 5px 8px)"></div>
<div class="a" style="left:2px;top:409px;width:763px;height:1px;background:repeating-linear-gradient(to right,#1f6f99 0 5px,#8fc8e4 5px 8px)"></div>
<div class="a" style="left:188px;top:80px;width:1px;height:687px;background:repeating-linear-gradient(to bottom,#1f6f99 0 5px,#8fc8e4 5px 8px)"></div>
<div class="a" style="left:578px;top:80px;width:1px;height:687px;background:repeating-linear-gradient(to bottom,#1f6f99 0 5px,#8fc8e4 5px 8px)"></div>
<div class="a" style="left:294px;top:310px;width:178px;height:24px;background:#383b43;border-radius:3px"></div>
<svg class="a" style="left:374px;top:333px" width="18" height="9" viewBox="0 0 18 9"><path d="M0 0h18L9 8.500z" fill="#383b43"/></svg>
<div class="a pre" style="left:300px;top:313px;height:18px;line-height:18px;font-size:13px;color:#75bfff"><span style="color:#b98eff">pre</span>.continuing</div>
<div class="a" style="left:386px;top:315px;width:1px;height:14px;background:#5c5f66"></div>
<div class="a pre" style="left:393px;top:313px;height:18px;line-height:18px;font-size:13px;letter-spacing:-0.2px;color:#e8e8e8">391.033 × 66</div>
<div class="a" style="left:2px;top:767px;width:763px;height:11px;background:#d4d4d4"></div>
<div class="a" style="left:5px;top:770px;width:716px;height:6px;background:#8a8a8a;border-radius:3px"></div>
<div class="a" style="left:765px;top:767px;width:11px;height:11px;background:#f2f2f2"></div>
<div class="a" style="left:0;top:778px;width:1280px;height:3px;background:#880676"></div>

<!-- ===== devtools ===== -->
<div id="devtools" class="a" style="left:776px;top:80px;width:502px;height:698px;background:#18181a;overflow:hidden">
<div class="a" style="left:0.00px;top:0.00px;width:1px;height:698px;background:#38383d;"></div>
<div class="a" style="left:1.00px;top:0.00px;width:501px;height:28px;background:#0c0c0d;"></div>
<div class="a" style="left:1.00px;top:28.00px;width:501px;height:1px;background:#38383d;"></div>
<svg class="a" style="left:9.00px;top:7.00px" width="16" height="15" viewBox="0 0 16 15"><path d="M7 13.200H3.500a2 2 0 0 1-2-2V3.300a2 2 0 0 1 2-2h8a2 2 0 0 1 2 2V7" fill="none" stroke="#e0e0e0" stroke-width="1.800"/><path d="M7 6l8.200 3.200-3.500 1 2.800 3-1.200 1.100-2.800-3-1.200 3.300z" fill="#cfcfcf"/></svg>
<div class="a" style="left:33.00px;top:4.00px;width:1px;height:20px;background:#48484d;"></div>
<div class="a" style="left:34.00px;top:0.00px;width:94px;height:2px;background:#0a84ff;"></div>
<svg class="a" style="left:41.00px;top:5.00px" width="18" height="18" viewBox="0 0 18 18"><rect x="3.500" y="3.500" width="11" height="11" rx="2" fill="none" stroke="#fff" stroke-width="2"/><path d="M9 0v3M9 15v3M0 9h3M15 9h3" stroke="#bbb" stroke-width="1.500"/></svg>
<div class="a pre" style="left:64.00px;top:6.50px;height:16px;line-height:16px;font-size:13.4px;color:#f9f9fa;letter-spacing:0.1px">Inspector</div>
<svg class="a" style="left:136.00px;top:6.00px" width="17" height="16" viewBox="0 0 17 16"><rect x="1" y="1.500" width="15" height="13" rx="2" fill="none" stroke="#cfcfcf" stroke-width="1.700"/><path d="M5.500 5l3 3-3 3" fill="none" stroke="#cfcfcf" stroke-width="1.500"/></svg>
<div class="a pre" style="left:158.00px;top:6.50px;height:16px;line-height:16px;font-size:13.2px;color:#b1b1b3;">Console</div>
<svg class="a" style="left:222.00px;top:7.00px" width="16" height="14" viewBox="0 0 16 14"><path d="M1.500 1.500h9l4 5.500-4 5.500h-9z" fill="none" stroke="#cfcfcf" stroke-width="1.700" stroke-linejoin="round"/></svg>
<div class="a pre" style="left:243.00px;top:6.50px;height:16px;line-height:16px;font-size:13.4px;color:#b1b1b3;letter-spacing:0.2px">Debugger</div>
<svg class="a" style="left:317.00px;top:8.00px" width="15" height="13" viewBox="0 0 15 13"><path d="M1.500 1.500l5 5-5 5M7.500 1.500l5 5-5 5" fill="none" stroke="#e0e0e0" stroke-width="1.800"/></svg>
<svg class="a" style="left:428.00px;top:6.00px" width="17" height="17" viewBox="0 0 17 17"><rect x="1" y="1" width="15" height="15" rx="1.500" fill="none" stroke="#d8d8d8" stroke-width="1.600"/><rect x="1" y="6" width="6" height="10" fill="#0c0c0d" stroke="#d8d8d8" stroke-width="1.600"/></svg>
<svg class="a" style="left:455.00px;top:11.00px" width="17" height="6" viewBox="0 0 17 6"><circle cx="2.500" cy="3" r="2.100" fill="#d8d8d8"/><circle cx="8.500" cy="3" r="2.100" fill="#d8d8d8"/><circle cx="14.500" cy="3" r="2.100" fill="#d8d8d8"/></svg>
<svg class="a" style="left:483.00px;top:9.00px" width="12" height="12" viewBox="0 0 12 12"><path d="M1 1l10 10M11 1L1 11" stroke="#d8d8d8" stroke-width="1.600"/></svg>
<div class="a" style="left:1.00px;top:29.00px;width:501px;height:24px;background:#1c1b22;"></div>
<div class="a" style="left:1.00px;top:53.00px;width:501px;height:1px;background:#38383d;"></div>
<svg class="a" style="left:9.00px;top:35.00px" width="13" height="13" viewBox="0 0 13 13"><circle cx="5" cy="5" r="3.800" fill="none" stroke="#8f8f93" stroke-width="1.600"/><path d="M7.800 7.800l4.500 4.500" stroke="#8f8f93" stroke-width="1.700"/></svg>
<div class="a pre" style="left:24.00px;top:33.50px;height:16px;line-height:16px;font-size:12.2px;color:#8a8a8e;letter-spacing:-0.35px">Search HTML</div>
<div class="a" style="left:441.00px;top:32.00px;width:1px;height:19px;background:#48484d;"></div>
<svg class="a" style="left:451.00px;top:35.00px" width="13" height="13" viewBox="0 0 13 13"><path d="M6.500 0v13M0 6.500h13" stroke="#d8d8d8" stroke-width="1.700"/></svg>
<svg class="a" style="left:477.00px;top:33.00px" width="16" height="16" viewBox="0 0 16 16"><path d="M2 14l8-8" stroke="#cfcfcf" stroke-width="3" stroke-linecap="round"/><path d="M2.600 13.400l7.200-7.200" stroke="#1c1b22" stroke-width="1.200"/><path d="M9 4l3-3 3 3-3 3z" fill="#cfcfcf"/><path d="M8 5l3 3" stroke="#cfcfcf" stroke-width="2"/></svg>
<div class="a" style="left:1.00px;top:54.00px;width:489px;height:268px;background:#232327;"></div>
<div class="a" style="left:490.00px;top:54.00px;width:12px;height:268px;background:#39393e;"></div>
<div class="a" style="left:491.00px;top:197.00px;width:10px;height:28px;background:#7a7a7c;border-radius:1px"></div>
<div class="a" style="left:1.00px;top:164.00px;width:489px;height:16px;background:#204e8a;"></div>
<div class="a" style="left:1.00px;top:242.00px;width:489px;height:16px;background:#353b48;"></div>
<div class="a" style="left:43.00px;top:181.00px;width:1px;height:76px;background:#2a5ca3;"></div>
<svg class="a" style="left:41.50px;top:55.70px" width="6" height="9" viewBox="0 0 6 9"><path d="M0 0l6 4.500L0 9z" fill="#8f8f93"/></svg>
<div class="a pre mono" style="left:51.00px;top:53.20px;height:16px;line-height:16px;font-size:11px"><span style="color:#d7d7db">&lt;</span><span style="color:#75bfff">ul</span> <span style="color:#ff7de9">class</span><span style="color:#d7d7db">="</span><span style="color:#b98eff">continuation</span><span style="color:#d7d7db">"</span><span style="color:#d7d7db">&gt;</span><span style="display:inline-block;vertical-align:top;margin:3px 2px 0 3px;width:14px;height:10px;border:1px solid #8f8f93;border-radius:2px;background:#232327;position:relative"><span style="position:absolute;left:2px;top:3px;width:2px;height:2px;background:#d7d7db;border-radius:1px"></span><span style="position:absolute;left:5px;top:3px;width:2px;height:2px;background:#d7d7db;border-radius:1px"></span><span style="position:absolute;left:8px;top:3px;width:2px;height:2px;background:#d7d7db;border-radius:1px"></span></span><span style="color:#d7d7db">&lt;/</span><span style="color:#75bfff">ul</span><span style="color:#d7d7db">&gt;</span></div>
<div class="a pre mono" style="left:51.00px;top:69.30px;height:16px;line-height:16px;font-size:11px"><span style="color:#d7d7db">&lt;</span><span style="color:#75bfff">p</span> <span style="color:#ff7de9">class</span><span style="color:#d7d7db">="</span><span style="color:#b98eff">indented continued</span><span style="color:#d7d7db">"</span><span style="color:#d7d7db">&gt;</span><span style="color:#f9f9fa">And so:</span><span style="color:#d7d7db">&lt;/</span><span style="color:#75bfff">p</span><span style="color:#d7d7db">&gt;</span></div>
<svg class="a" style="left:41.50px;top:87.80px" width="6" height="9" viewBox="0 0 6 9"><path d="M0 0l6 4.500L0 9z" fill="#8f8f93"/></svg>
<div class="a pre mono" style="left:51.00px;top:85.30px;height:16px;line-height:16px;font-size:11px"><span style="color:#d7d7db">&lt;</span><span style="color:#75bfff">table</span> <span style="color:#ff7de9">class</span><span style="color:#d7d7db">="</span><span style="color:#b98eff">bigtable</span><span style="color:#d7d7db">"</span><span style="color:#d7d7db">&gt;</span><span style="display:inline-block;vertical-align:top;margin:3px 2px 0 3px;width:14px;height:10px;border:1px solid #8f8f93;border-radius:2px;background:#232327;position:relative"><span style="position:absolute;left:2px;top:3px;width:2px;height:2px;background:#d7d7db;border-radius:1px"></span><span style="position:absolute;left:5px;top:3px;width:2px;height:2px;background:#d7d7db;border-radius:1px"></span><span style="position:absolute;left:8px;top:3px;width:2px;height:2px;background:#d7d7db;border-radius:1px"></span></span><span style="color:#d7d7db">&lt;/</span><span style="color:#75bfff">table</span><span style="color:#d7d7db">&gt;</span></div>
<svg class="a" style="left:41.50px;top:103.90px" width="6" height="9" viewBox="0 0 6 9"><path d="M0 0l6 4.500L0 9z" fill="#8f8f93"/></svg>
<div class="a pre mono" style="left:51.00px;top:101.40px;height:16px;line-height:16px;font-size:11px"><span style="color:#d7d7db">&lt;</span><span style="color:#75bfff">p</span> <span style="color:#ff7de9">class</span><span style="color:#d7d7db">="</span><span style="color:#b98eff">indented continued</span><span style="color:#d7d7db">"</span><span style="color:#d7d7db">&gt;</span><span style="display:inline-block;vertical-align:top;margin:3px 2px 0 3px;width:14px;height:10px;border:1px solid #8f8f93;border-radius:2px;background:#232327;position:relative"><span style="position:absolute;left:2px;top:3px;width:2px;height:2px;background:#d7d7db;border-radius:1px"></span><span style="position:absolute;left:5px;top:3px;width:2px;height:2px;background:#d7d7db;border-radius:1px"></span><span style="position:absolute;left:8px;top:3px;width:2px;height:2px;background:#d7d7db;border-radius:1px"></span></span><span style="color:#d7d7db">&lt;/</span><span style="color:#75bfff">p</span><span style="color:#d7d7db">&gt;</span></div>
<svg class="a" style="left:41.50px;top:119.80px" width="6" height="9" viewBox="0 0 6 9"><path d="M0 0l6 4.500L0 9z" fill="#8f8f93"/></svg>
<div class="a pre mono" style="left:51.00px;top:117.30px;height:16px;line-height:16px;font-size:11px"><span style="color:#d7d7db">&lt;</span><span style="color:#75bfff">center</span><span style="color:#d7d7db">&gt;</span><span style="display:inline-block;vertical-align:top;margin:3px 2px 0 3px;width:14px;height:10px;border:1px solid #8f8f93;border-radius:2px;background:#232327;position:relative"><span style="position:absolute;left:2px;top:3px;width:2px;height:2px;background:#d7d7db;border-radius:1px"></span><span style="position:absolute;left:5px;top:3px;width:2px;height:2px;background:#d7d7db;border-radius:1px"></span><span style="position:absolute;left:8px;top:3px;width:2px;height:2px;background:#d7d7db;border-radius:1px"></span></span><span style="color:#d7d7db">&lt;/</span><span style="color:#75bfff">center</span><span style="color:#d7d7db">&gt;</span></div>
<svg class="a" style="left:41.50px;top:135.90px" width="6" height="9" viewBox="0 0 6 9"><path d="M0 0l6 4.500L0 9z" fill="#8f8f93"/></svg>
<div class="a pre mono" style="left:51.00px;top:133.40px;height:16px;line-height:16px;font-size:11px"><span style="color:#d7d7db">&lt;</span><span style="color:#75bfff">p</span> <span style="color:#ff7de9">class</span><span style="color:#d7d7db">="</span><span style="color:#b98eff">continuation</span><span style="color:#d7d7db">"</span><span style="color:#d7d7db">&gt;</span><span style="display:inline-block;vertical-align:top;margin:3px 2px 0 3px;width:14px;height:10px;border:1px solid #8f8f93;border-radius:2px;background:#232327;position:relative"><span style="position:absolute;left:2px;top:3px;width:2px;height:2px;background:#d7d7db;border-radius:1px"></span><span style="position:absolute;left:5px;top:3px;width:2px;height:2px;background:#d7d7db;border-radius:1px"></span><span style="position:absolute;left:8px;top:3px;width:2px;height:2px;background:#d7d7db;border-radius:1px"></span></span><span style="color:#d7d7db">&lt;/</span><span style="color:#75bfff">p</span><span style="color:#d7d7db">&gt;</span></div>
<div class="a pre mono" style="left:51.00px;top:149.30px;height:16px;line-height:16px;font-size:11px"><span style="color:#d7d7db">&lt;</span><span style="color:#75bfff">p</span> <span style="color:#ff7de9">class</span><span style="color:#d7d7db">="</span><span style="color:#b98eff">indented continued</span><span style="color:#d7d7db">"</span><span style="color:#d7d7db">&gt;</span><span style="color:#f9f9fa">If it says something like</span><span style="color:#d7d7db">&lt;/</span><span style="color:#75bfff">p</span><span style="color:#d7d7db">&gt;</span></div>
<svg class="a" style="left:39.50px;top:169.30px" width="9" height="6" viewBox="0 0 9 6"><path d="M0 0h9L4.500 6z" fill="#fff"/></svg>
<div class="a pre mono" style="left:51.00px;top:165.30px;height:16px;line-height:16px;font-size:11px"><span style="color:#fff">&lt;</span><span style="color:#fff">pre</span> <span style="color:#fff">class</span><span style="color:#fff">="</span><span style="color:#fff">continuing</span><span style="color:#fff">"</span><span style="color:#fff">&gt;</span></div>
<svg class="a" style="left:51.00px;top:185.30px" width="9" height="6" viewBox="0 0 9 6"><path d="M0 0h9L4.500 6z" fill="#8f8f93"/></svg>
<div class="a pre mono" style="left:62.00px;top:181.30px;height:16px;line-height:16px;font-size:11px"><span style="color:#d7d7db">&lt;</span><span style="color:#75bfff">code</span> <span style="color:#ff7de9">class</span><span style="color:#d7d7db">="</span><span style="color:#b98eff">continuing</span><span style="color:#d7d7db">"</span><span style="color:#d7d7db">&gt;</span></div>
<div class="a pre mono" style="left:74.00px;top:196.80px;height:16px;line-height:16px;font-size:11px"><span style="color:#f9f9fa">[FAILED] Failed to start Import ZFS pools by cache file. See</span></div>
<div class="a pre mono" style="left:74.00px;top:211.60px;height:16px;line-height:16px;font-size:11px"><span style="color:#f9f9fa">'systemctl status zfs-import-cache.service' for details.</span></div>
<div class="a pre mono" style="left:62.00px;top:227.20px;height:16px;line-height:16px;font-size:11px"><span style="color:#d7d7db">&lt;/</span><span style="color:#75bfff">code</span><span style="color:#d7d7db">&gt;</span></div>
<div class="a pre mono" style="left:51.00px;top:243.20px;height:16px;line-height:16px;font-size:11px"><span style="color:#d7d7db">&lt;/</span><span style="color:#75bfff">pre</span><span style="color:#d7d7db">&gt;</span></div>
<svg class="a" style="left:41.50px;top:261.80px" width="6" height="9" viewBox="0 0 6 9"><path d="M0 0l6 4.500L0 9z" fill="#8f8f93"/></svg>
<div class="a pre mono" style="left:51.00px;top:259.30px;height:16px;line-height:16px;font-size:11px"><span style="color:#d7d7db">&lt;</span><span style="color:#75bfff">p</span> <span style="color:#ff7de9">class</span><span style="color:#d7d7db">="</span><span style="color:#b98eff">continuation</span><span style="color:#d7d7db">"</span><span style="color:#d7d7db">&gt;</span><span style="display:inline-block;vertical-align:top;margin:3px 2px 0 3px;width:14px;height:10px;border:1px solid #8f8f93;border-radius:2px;background:#232327;position:relative"><span style="position:absolute;left:2px;top:3px;width:2px;height:2px;background:#d7d7db;border-radius:1px"></span><span style="position:absolute;left:5px;top:3px;width:2px;height:2px;background:#d7d7db;border-radius:1px"></span><span style="position:absolute;left:8px;top:3px;width:2px;height:2px;background:#d7d7db;border-radius:1px"></span></span><span style="color:#d7d7db">&lt;/</span><span style="color:#75bfff">p</span><span style="color:#d7d7db">&gt;</span></div>
<div class="a pre mono" style="left:51.00px;top:275.00px;height:16px;line-height:16px;font-size:11px"><span style="color:#d7d7db">&lt;</span><span style="color:#75bfff">p</span> <span style="color:#ff7de9">class</span><span style="color:#d7d7db">="</span><span style="color:#b98eff">indented continued</span><span style="color:#d7d7db">"</span><span style="color:#d7d7db">&gt;</span></div>
<div class="a pre mono" style="left:51.00px;top:288.60px;height:16px;line-height:16px;font-size:11px"><span style="color:#f9f9fa">Post-login, the mounts should now be all ZFS:</span><span style="color:#d7d7db">&lt;/</span><span style="color:#75bfff">p</span><span style="color:#d7d7db">&gt;</span></div>
<svg class="a" style="left:41.50px;top:307.80px" width="6" height="9" viewBox="0 0 6 9"><path d="M0 0l6 4.500L0 9z" fill="#8f8f93"/></svg>
<div class="a pre mono" style="left:51.00px;top:305.30px;height:16px;line-height:16px;font-size:11px"><span style="color:#d7d7db">&lt;</span><span style="color:#75bfff">center</span><span style="color:#d7d7db">&gt;</span><span style="display:inline-block;vertical-align:top;margin:3px 2px 0 3px;width:14px;height:10px;border:1px solid #8f8f93;border-radius:2px;background:#232327;position:relative"><span style="position:absolute;left:2px;top:3px;width:2px;height:2px;background:#d7d7db;border-radius:1px"></span><span style="position:absolute;left:5px;top:3px;width:2px;height:2px;background:#d7d7db;border-radius:1px"></span><span style="position:absolute;left:8px;top:3px;width:2px;height:2px;background:#d7d7db;border-radius:1px"></span></span><span style="color:#d7d7db">&lt;/</span><span style="color:#75bfff">center</span><span style="color:#d7d7db">&gt;</span></div>
<div class="a" style="left:1.00px;top:322.00px;width:501px;height:1px;background:#38383d;"></div>
<div class="a" style="left:1.00px;top:323.00px;width:501px;height:24px;background:#232327;"></div>
<div class="a" style="left:1.00px;top:347.00px;width:501px;height:1px;background:#38383d;"></div>
<svg class="a" style="left:8.00px;top:329.00px" width="9" height="13" viewBox="0 0 9 13"><path d="M7 1.500L2 6.500l5 5" fill="none" stroke="#d8d8d8" stroke-width="1.800"/></svg>
<div class="a" style="left:22.00px;top:323.00px;width:1px;height:24px;background:#38383d;"></div>
<div class="a" style="left:23.00px;top:323.00px;width:466px;height:24px;overflow:hidden">
<div class="a pre" style="left:0;top:4px;height:16px;line-height:16px;font-size:12px;color:#d7d7db;letter-spacing:-0.25px">_318.idc0_318</div>
</div>
<svg class="a" style="left:106.00px;top:331.00px" width="6" height="9" viewBox="0 0 6 9"><path d="M1 1l3.500 3.500L1 8" fill="none" stroke="#8f8f93" stroke-width="1.300"/></svg>
<div class="a pre" style="left:119.00px;top:326.50px;height:16px;line-height:16px;font-size:12.5px;color:#e8e8ea;">body</div>
<svg class="a" style="left:154.00px;top:331.00px" width="6" height="9" viewBox="0 0 6 9"><path d="M1 1l3.500 3.500L1 8" fill="none" stroke="#8f8f93" stroke-width="1.300"/></svg>
<div class="a pre" style="left:165.00px;top:326.50px;height:16px;line-height:16px;font-size:12.5px;color:#e8e8ea;letter-spacing:-0.05px">span.roboto.writing</div>
<svg class="a" style="left:279.00px;top:331.00px" width="6" height="9" viewBox="0 0 6 9"><path d="M1 1l3.500 3.500L1 8" fill="none" stroke="#8f8f93" stroke-width="1.300"/></svg>
<div class="a pre" style="left:291.00px;top:326.50px;height:16px;line-height:16px;font-size:12.5px;color:#75bfff;letter-spacing:0.1px">pre.continuing</div>
<svg class="a" style="left:378.00px;top:331.00px" width="6" height="9" viewBox="0 0 6 9"><path d="M1 1l3.500 3.500L1 8" fill="none" stroke="#8f8f93" stroke-width="1.300"/></svg>
<div class="a pre" style="left:389.00px;top:326.50px;height:16px;line-height:16px;font-size:12.5px;color:#f9f9fa;letter-spacing:-0.1px">code.continuing</div>
<svg class="a" style="left:483.00px;top:329.00px" width="9" height="13" viewBox="0 0 9 13"><path d="M2 1.500l5 5-5 5" fill="none" stroke="#8f8f93" stroke-width="1.800"/></svg>
<div class="a" style="left:1.00px;top:348.00px;width:151px;height:47px;background:#232327;"></div>
<svg class="a" style="left:11.00px;top:354.00px" width="11" height="12" viewBox="0 0 11 12"><path d="M.800 1h9.400L6.500 6v5l-2-1.500V6z" fill="none" stroke="#8f8f93" stroke-width="1.300" stroke-linejoin="round"/></svg>
<div class="a pre" style="left:24.00px;top:353.50px;height:16px;line-height:16px;font-size:12.4px;color:#8a8a8e;letter-spacing:-0.2px">Filter Styles</div>
<div class="a pre" style="left:5.00px;top:376.50px;height:16px;line-height:16px;font-size:13px;color:#e0e0e2;font-weight:bold;letter-spacing:0px">:hov .cls</div>
<svg class="a" style="left:68.00px;top:378.00px" width="12" height="12" viewBox="0 0 12 12"><path d="M6 0v12M0 6h12" stroke="#d8d8d8" stroke-width="1.600"/></svg>
<svg class="a" style="left:96.00px;top:376.00px" width="12" height="15" viewBox="0 0 12 15"><path d="M1 2.500a1.500 1.500 0 0 1 1.500-1.500H8l3 3v8.500a1.500 1.500 0 0 1-1.500 1.500h-7A1.500 1.500 0 0 1 1 12.500z" fill="none" stroke="#d8d8d8" stroke-width="1.500"/><path d="M3.500 7h5M3.500 9h5M3.500 11h3" stroke="#d8d8d8" stroke-width="1"/></svg>
<div class="a" style="left:1.00px;top:395.00px;width:139px;height:1px;background:#38383d;"></div>
<div class="a" style="left:1.00px;top:396.00px;width:139px;height:302px;background:#18181a;"></div>
<div class="a" style="left:140.00px;top:395.00px;width:12px;height:303px;background:#39393e;"></div>
<div class="a" style="left:140.00px;top:395.00px;width:11px;height:281px;background:#7b7b7d;"></div>
<div class="a" style="left:151.00px;top:348.00px;width:2px;height:350px;background:#232327;"></div>
<div class="a pre mono" style="left:6.00px;top:397.60px;height:16px;line-height:16px;font-size:11px;color:#d7d7db;">element</div>
<svg class="a" style="left:58.00px;top:399.60px" width="12" height="12" viewBox="0 0 12 12"><rect x="2.500" y="2.500" width="7" height="7" rx="1" fill="none" stroke="#cfcfcf" stroke-width="1.500"/><path d="M6 0v2.500M6 9.500V12M0 6h2.500M9.500 6H12" stroke="#cfcfcf" stroke-width="1.200"/></svg>
<div class="a pre mono" style="left:79.00px;top:397.60px;height:16px;line-height:16px;font-size:11px;color:#d7d7db;">{</div>
<div class="a pre mono" style="left:97.00px;top:397.60px;height:16px;line-height:16px;font-size:11px;color:#8f8f93;">inline</div>
<div class="a pre mono" style="left:6.00px;top:413.60px;height:16px;line-height:16px;font-size:11px;color:#d7d7db;">}</div>
<div class="a" style="left:1.00px;top:430.00px;width:139px;height:1px;background:#38383d;"></div>
<div class="a pre mono" style="left:82.00px;top:432.30px;height:16px;line-height:16px;font-size:11px;color:#8f8f93;">inline:5</div>
<div class="a pre mono" style="left:6.00px;top:448.30px;height:16px;line-height:16px;font-size:11px;color:#d7d7db;">.continuing</div>
<svg class="a" style="left:85.00px;top:450.30px" width="12" height="12" viewBox="0 0 12 12"><rect x="2.500" y="2.500" width="7" height="7" rx="1" fill="none" stroke="#cfcfcf" stroke-width="1.500"/><path d="M6 0v2.500M6 9.500V12M0 6h2.500M9.500 6H12" stroke="#cfcfcf" stroke-width="1.200"/></svg>
<div class="a pre mono" style="left:106.00px;top:448.30px;height:16px;line-height:16px;font-size:11px;color:#d7d7db;">{</div>
<div class="a pre mono" style="left:25.00px;top:464.00px;height:16px;line-height:16px;font-size:11px;color:#d7d7db;"><span style="color:#75bfff">margin-top</span>: <span style="color:#ff7de9">0</span>;</div>
<div class="a pre mono" style="left:25.00px;top:479.30px;height:16px;line-height:16px;font-size:11px;color:#d7d7db;"><span style="color:#75bfff">margin-bottom</span>:</div>
<div class="a pre mono" style="left:36.00px;top:494.20px;height:16px;line-height:16px;font-size:11px;color:#d7d7db;"><span style="color:#ff7de9">0</span>;</div>
<div class="a pre mono" style="left:6.00px;top:509.00px;height:16px;line-height:16px;font-size:11px;color:#d7d7db;">}</div>
<div class="a" style="left:1.00px;top:525.00px;width:139px;height:1px;background:#38383d;"></div>
<div class="a" style="left:1.00px;top:526.00px;width:139px;height:24px;background:#232327;"></div>
<div class="a pre" style="left:6.00px;top:530.50px;height:16px;line-height:16px;font-size:13.6px;color:#c8c8cc;letter-spacing:0.1px">Inherited from span</div>
<div class="a" style="left:1.00px;top:550.00px;width:139px;height:1px;background:#38383d;"></div>
<div class="a pre mono" style="left:16.00px;top:552.60px;height:16px;line-height:16px;font-size:11px;color:#8f8f93;">Roboto-font.css:44</div>
<div class="a pre mono" style="left:6.00px;top:568.50px;height:16px;line-height:16px;font-size:11px;color:#d7d7db;">.roboto</div>
<svg class="a" style="left:58.00px;top:570.50px" width="12" height="12" viewBox="0 0 12 12"><rect x="2.500" y="2.500" width="7" height="7" rx="1" fill="none" stroke="#cfcfcf" stroke-width="1.500"/><path d="M6 0v2.500M6 9.500V12M0 6h2.500M9.500 6H12" stroke="#cfcfcf" stroke-width="1.200"/></svg>
<div class="a pre mono" style="left:78.00px;top:568.50px;height:16px;line-height:16px;font-size:11px;color:#d7d7db;">{</div>
<div class="a pre mono" style="left:25.00px;top:584.00px;height:16px;line-height:16px;font-size:11px;color:#d7d7db;"><span style="color:#75bfff">font-family</span>:</div>
<div class="a pre mono" style="left:36.00px;top:599.00px;height:16px;line-height:16px;font-size:11px;color:#d7d7db;"><span style="color:#ff7de9">"Roboto Slab"</span>,</div>
<div class="a pre mono" style="left:36.00px;top:614.00px;height:16px;line-height:16px;font-size:11px;color:#d7d7db;"><span style="color:#ff7de9;text-decoration:underline">serif</span>;</div>
<div class="a pre mono" style="left:25.00px;top:630.00px;height:16px;line-height:16px;font-size:11px;color:#9a9a9e;text-decoration:line-through">font-size:</div>
<div class="a pre mono" style="left:36.00px;top:645.00px;height:16px;line-height:16px;font-size:11px;color:#9a9a9e;text-decoration:line-through">calc(19em /</div>
<div class="a pre mono" style="left:36.00px;top:660.00px;height:16px;line-height:16px;font-size:11px;color:#9a9a9e;text-decoration:line-through">22);</div>
<div class="a pre mono" style="left:25.00px;top:675.30px;height:16px;line-height:16px;font-size:11px;color:#d7d7db;"><span style="color:#75bfff">font-size</span>:</div>
<div class="a pre mono" style="left:36.00px;top:689.50px;height:16px;line-height:16px;font-size:11px;color:#d7d7db;"><span style="color:#ff7de9">0.95em</span>;</div>
<div class="a" style="left:153.00px;top:348.00px;width:349px;height:25px;background:#0c0c0d;"></div>
<div class="a" style="left:180.00px;top:348.00px;width:63px;height:3px;background:#0a84ff;"></div>
<svg class="a" style="left:159.00px;top:355.00px" width="15" height="14" viewBox="0 0 15 14"><rect x=".800" y=".800" width="13.400" height="12.400" fill="none" stroke="#d8d8d8" stroke-width="1.500"/><path d="M10 1v12" stroke="#d8d8d8" stroke-width="1.500"/><path d="M4 4l3.500 3L4 10z" fill="#d8d8d8"/></svg>
<div class="a pre" style="left:191.00px;top:353.50px;height:16px;line-height:16px;font-size:13.3px;color:#f9f9fa;">Layout</div>
<div class="a pre" style="left:254.00px;top:353.50px;height:16px;line-height:16px;font-size:13.1px;color:#b1b1b3;">Computed</div>
<div class="a pre" style="left:338.00px;top:353.50px;height:16px;line-height:16px;font-size:13px;color:#b1b1b3;">Changes</div>
<div class="a" style="left:412.00px;top:353.00px;width:75px;height:18px;overflow:hidden"><div class="a pre" style="left:0;top:0;line-height:18px;font-size:13.2px;color:#b1b1b3">Compatibility</div></div>
<div class="a" style="left:487.00px;top:348.00px;width:1px;height:25px;background:#38383d;"></div>
<svg class="a" style="left:490.00px;top:358.00px" width="10" height="6" viewBox="0 0 10 6"><path d="M0 0h10L5 6z" fill="#d8d8d8"/></svg>
<div class="a" style="left:153.00px;top:373.00px;width:337px;height:1px;background:#38383d;"></div>
<div class="a" style="left:153.00px;top:374.00px;width:337px;height:324px;background:#18181a;"></div>
<div class="a" style="left:490.00px;top:373.00px;width:12px;height:325px;background:#39393e;"></div>
<div class="a" style="left:491.00px;top:373.00px;width:10px;height:216px;background:#7b7b7d;"></div>
<div class="a" style="left:153.00px;top:374.00px;width:337px;height:24px;background:#232327;"></div>
<div class="a" style="left:153.00px;top:398.00px;width:337px;height:1px;background:#38383d;"></div>
<svg class="a" style="left:159.00px;top:383.50px" width="9" height="6" viewBox="0 0 9 6"><path d="M0 0h9L4.500 6z" fill="#8f8f93"/></svg>
<div class="a pre" style="left:172.00px;top:379.00px;height:16px;line-height:16px;font-size:13.2px;color:#c4c4c8;letter-spacing:0.1px">Flexbox</div>
<div class="a pre" style="left:172.00px;top:406.00px;height:16px;line-height:16px;font-size:13.5px;color:#b1b1b3;font-style:italic;letter-spacing:0.15px">Select a Flex container or item to continue.</div>
<div class="a" style="left:153.00px;top:427.00px;width:337px;height:1px;background:#38383d;"></div>
<div class="a" style="left:153.00px;top:428.00px;width:337px;height:24px;background:#232327;"></div>
<div class="a" style="left:153.00px;top:452.00px;width:337px;height:1px;background:#38383d;"></div>
<svg class="a" style="left:159.00px;top:437.50px" width="9" height="6" viewBox="0 0 9 6"><path d="M0 0h9L4.500 6z" fill="#8f8f93"/></svg>
<div class="a pre" style="left:172.00px;top:433.00px;height:16px;line-height:16px;font-size:13.2px;color:#c4c4c8;letter-spacing:0.1px">Grid</div>
<div class="a pre" style="left:172.00px;top:460.00px;height:16px;line-height:16px;font-size:13.5px;color:#b1b1b3;font-style:italic;letter-spacing:0.15px">CSS Grid is not in use on this page</div>
<div class="a" style="left:153.00px;top:480.00px;width:337px;height:1px;background:#38383d;"></div>
<div class="a" style="left:153.00px;top:481.00px;width:337px;height:24px;background:#232327;"></div>
<div class="a" style="left:153.00px;top:505.00px;width:337px;height:1px;background:#38383d;"></div>
<svg class="a" style="left:159.00px;top:490.50px" width="9" height="6" viewBox="0 0 9 6"><path d="M0 0h9L4.500 6z" fill="#8f8f93"/></svg>
<div class="a pre" style="left:172.00px;top:486.00px;height:16px;line-height:16px;font-size:13.2px;color:#c4c4c8;letter-spacing:0.1px">Box Model</div>
<div class="a" style="left:190.00px;top:531.00px;width:262px;height:127px;background:#77784e;border:1px dashed #e0e05a"></div>
<div class="a" style="left:213.00px;top:554.00px;width:216px;height:82px;background:#38383d;"></div>
<div class="a" style="left:218.00px;top:559.00px;width:206px;height:72px;background:#6a5ab4;"></div>
<div class="a" style="left:213.00px;top:557.00px;width:47px;height:12px;background:#38383d;border-radius:0 0 4px 0"></div>
<div class="a" style="left:244.00px;top:585.00px;width:154px;height:20px;background:#3d7da6;border:1px dashed #53b8f0"></div>
<div class="a pre mono" style="left:199.00px;top:535.00px;height:16px;line-height:16px;font-size:11px;color:#f0f0f0">margin</div>
<div class="a pre mono" style="left:216.00px;top:554.00px;height:16px;line-height:16px;font-size:11px;color:#f0f0f0">border</div>
<div class="a pre mono" style="left:230.00px;top:570.00px;height:16px;line-height:16px;font-size:11px;color:#f0f0f0">padding</div>
<div class="a pre mono" style="left:259.50px;top:532.00px;width:120px;text-align:center;height:16px;line-height:16px;font-size:11px;color:#f0f0f0">0</div>
<div class="a" style="left:312.50px;top:548.50px;width:14px;height:16px;background:#38383d;border-radius:4px"></div>
<div class="a pre mono" style="left:259.50px;top:548.50px;width:120px;text-align:center;height:16px;line-height:16px;font-size:11px;color:#f0f0f0">0</div>
<div class="a pre mono" style="left:259.50px;top:566.00px;width:120px;text-align:center;height:16px;line-height:16px;font-size:11px;color:#f0f0f0">0</div>
<div class="a pre mono" style="left:259.50px;top:587.00px;width:120px;text-align:center;height:16px;line-height:16px;font-size:11px;color:#f0f0f0">391.033×66</div>
<div class="a pre mono" style="left:259.50px;top:608.00px;width:120px;text-align:center;height:16px;line-height:16px;font-size:11px;color:#f0f0f0">0</div>
<div class="a" style="left:312.50px;top:626.00px;width:14px;height:16px;background:#38383d;border-radius:4px"></div>
<div class="a pre mono" style="left:259.50px;top:626.00px;width:120px;text-align:center;height:16px;line-height:16px;font-size:11px;color:#f0f0f0">0</div>
<div class="a pre mono" style="left:259.50px;top:642.50px;width:120px;text-align:center;height:16px;line-height:16px;font-size:11px;color:#f0f0f0">0</div>
<div class="a pre mono" style="left:140.00px;top:587.00px;width:120px;text-align:center;height:16px;line-height:16px;font-size:11px;color:#f0f0f0">0</div>
<div class="a" style="left:208.00px;top:587.00px;width:14px;height:16px;background:#38383d;border-radius:4px"></div>
<div class="a pre mono" style="left:155.00px;top:587.00px;width:120px;text-align:center;height:16px;line-height:16px;font-size:11px;color:#f0f0f0">0</div>
<div class="a pre mono" style="left:172.00px;top:587.00px;width:120px;text-align:center;height:16px;line-height:16px;font-size:11px;color:#f0f0f0">0</div>
<div class="a pre mono" style="left:349.00px;top:587.00px;width:120px;text-align:center;height:16px;line-height:16px;font-size:11px;color:#f0f0f0">0</div>
<div class="a" style="left:419.00px;top:587.00px;width:14px;height:16px;background:#38383d;border-radius:4px"></div>
<div class="a pre mono" style="left:366.00px;top:587.00px;width:120px;text-align:center;height:16px;line-height:16px;font-size:11px;color:#f0f0f0">0</div>
<div class="a pre mono" style="left:381.50px;top:587.00px;width:120px;text-align:center;height:16px;line-height:16px;font-size:11px;color:#f0f0f0">0</div>
<div class="a pre" style="left:171.00px;top:686.50px;height:16px;line-height:16px;font-size:13px;color:#a8a8ac;letter-spacing:-0.1px">391.033×66</div>
<div class="a pre" style="left:441.00px;top:686.50px;height:16px;line-height:16px;font-size:12.5px;color:#a8a8ac;">static</div>
</div>

<!-- ===== i3bar ===== -->
<div id="i3bar" class="a" style="left:0;top:781px;width:1280px;height:19px;background:#000"></div>
<div class="a" style="left:0px;top:782px;width:39px;height:17px;background:#222222;border:1px solid #333333"></div>
<div class="a pre mono" style="left:5px;top:783px;height:17px;line-height:17px;font-size:12px;color:#888888">1:</div>
<svg class="a" style="left:23px;top:784px" width="12" height="13" viewBox="0 0 12 13"><circle cx="6" cy="7" r="5.300" fill="#999"/><path d="M2.500 3.500c1-1.800 2-2.300 3-2.500-.3.800-.2 1.500.3 2" fill="#999"/><path d="M3.800 6.500c.5 1.300 1.700 2 3 1.800" fill="none" stroke="#222" stroke-width="0.9"/></svg>
<div class="a" style="left:40px;top:782px;width:55px;height:17px;background:#222222;border:1px solid #333333"></div>
<div class="a pre mono" style="left:45px;top:783px;height:17px;line-height:17px;font-size:12px;color:#888888">2:</div>
<svg class="a" style="left:63px;top:785px" width="12" height="12" viewBox="0 0 12 12"><path d="M6 1.500H1.500v9h9V6" fill="none" stroke="#999" stroke-width="1.200"/><path d="M4.500 7.500l.5-2L10 .5l1.500 1.500-5 5z" fill="#999"/></svg>
<svg class="a" style="left:80px;top:786px" width="12" height="10" viewBox="0 0 12 10"><path d="M1 1.500l3.500 3L1 7.500" fill="none" stroke="#999" stroke-width="1.300"/><path d="M6 8.800h5.500" stroke="#999" stroke-width="1.300"/></svg>
<div class="a" style="left:96px;top:782px;width:55px;height:17px;background:#880676;border:1px solid #9b109b"></div>
<div class="a pre mono" style="left:101px;top:783px;height:17px;line-height:17px;font-size:12px;color:#f0c8f0">3:</div>
<svg class="a" style="left:120px;top:784px" width="12" height="13" viewBox="0 0 12 13"><circle cx="6" cy="7" r="5.300" fill="#e0d0e0"/><path d="M2.500 3.500c1-1.800 2-2.300 3-2.500-.3.800-.2 1.500.3 2" fill="#e0d0e0"/><path d="M3.800 6.500c.5 1.300 1.700 2 3 1.800" fill="none" stroke="#880676" stroke-width="0.9"/></svg>
<svg class="a" style="left:136px;top:786px" width="12" height="10" viewBox="0 0 12 10"><path d="M1 1.500l3.500 3L1 7.500" fill="none" stroke="#e0d0e0" stroke-width="1.300"/><path d="M6 8.800h5.500" stroke="#e0d0e0" stroke-width="1.300"/></svg>
<div class="a" style="left:152px;top:782px;width:55px;height:17px;background:#222222;border:1px solid #333333"></div>
<div class="a pre mono" style="left:157px;top:783px;height:17px;line-height:17px;font-size:12px;color:#888888">4:</div>
<svg class="a" style="left:175px;top:784px" width="12" height="13" viewBox="0 0 12 13"><circle cx="6" cy="7" r="5.300" fill="#999"/><path d="M2.500 3.500c1-1.800 2-2.300 3-2.500-.3.800-.2 1.500.3 2" fill="#999"/><path d="M3.800 6.500c.5 1.300 1.700 2 3 1.800" fill="none" stroke="#222" stroke-width="0.9"/></svg>
<svg class="a" style="left:192px;top:786px" width="12" height="10" viewBox="0 0 12 10"><path d="M1 1.500l3.500 3L1 7.500" fill="none" stroke="#999" stroke-width="1.300"/><path d="M6 8.800h5.500" stroke="#999" stroke-width="1.300"/></svg>
<div class="a pre mono" style="left:428.5px;top:782px;height:19px;line-height:19px;font-size:10px;color:#f02a2a">no IPv6</div>
<div class="a" style="left:477px;top:784px;width:1px;height:13px;background:#5e5e5e"></div>
<div class="a pre mono" style="left:483.5px;top:782px;height:19px;line-height:19px;font-size:10px;color:#38e838">W: 192.168.1.35 (63% at my-net3)</div>
<div class="a" style="left:683px;top:784px;width:1px;height:13px;background:#5e5e5e"></div>
<div class="a pre mono" style="left:690px;top:782px;height:19px;line-height:19px;font-size:10px;color:#f02a2a">E: down</div>
<div class="a" style="left:739px;top:784px;width:1px;height:13px;background:#5e5e5e"></div>
<div class="a pre mono" style="left:746px;top:782px;height:19px;line-height:19px;font-size:10px;color:#e8e8e8">CHR 56.41% 01:00 33.9W</div>
<div class="a" style="left:885.5px;top:784px;width:1px;height:13px;background:#5e5e5e"></div>
<div class="a pre mono" style="left:892.5px;top:782px;height:19px;line-height:19px;font-size:10px;color:#e8e8e8">44%</div>
<div class="a" style="left:917px;top:784px;width:1px;height:13px;background:#5e5e5e"></div>
<div class="a pre mono" style="left:923.5px;top:782px;height:19px;line-height:19px;font-size:10px;color:#e8e8e8">61°C</div>
<div class="a" style="left:955px;top:784px;width:1px;height:13px;background:#5e5e5e"></div>
<div class="a pre mono" style="left:962.5px;top:782px;height:19px;line-height:19px;font-size:10px;color:#e8e8e8">2.3 GiB / 3.7 GiB</div>
<div class="a" style="left:1071px;top:784px;width:1px;height:13px;background:#5e5e5e"></div>
<div class="a pre mono" style="left:1077.5px;top:782px;height:19px;line-height:19px;font-size:10px;color:#e8e8e8">♪: 106%</div>
<div class="a" style="left:1127.5px;top:784px;width:1px;height:13px;background:#5e5e5e"></div>
<div class="a pre mono" style="left:1134px;top:782px;height:19px;line-height:19px;font-size:10px;color:#e8e8e8">pl</div>
<div class="a" style="left:1153px;top:784px;width:1px;height:13px;background:#5e5e5e"></div>
<div class="a pre mono" style="left:1160.5px;top:782px;height:19px;line-height:19px;font-size:10px;color:#e8e8e8">2020-09-13 00:51:00</div>

</body></html>
